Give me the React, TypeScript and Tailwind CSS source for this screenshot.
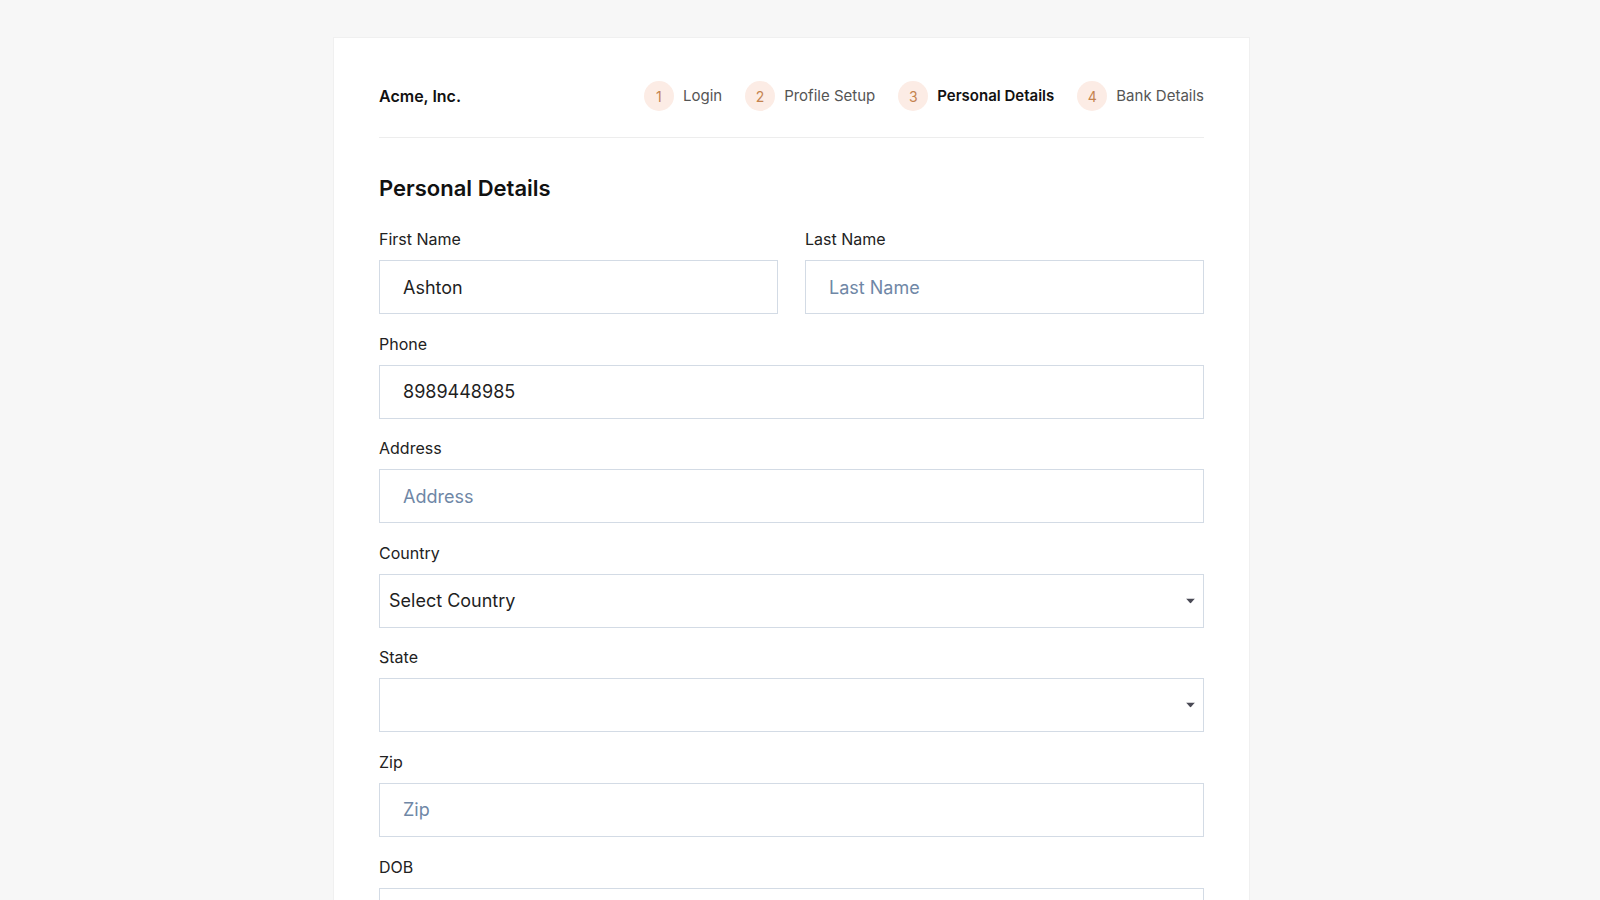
import React from 'react';

const steps = [
  { number: '1', label: 'Login' },
  { number: '2', label: 'Profile Setup' },
  { number: '3', label: 'Personal Details', active: true },
  { number: '4', label: 'Bank Details' },
];

const inputClass =
  'w-full h-[54px] border border-[#d3dbe5] bg-white px-[23px] text-[18px] text-[#1f1f1f] placeholder:text-[#6f87a6] outline-none';

const Field: React.FC<{ label: string; children: React.ReactNode }> = ({ label, children }) => (
  <div>
    <label className="block text-[16px] leading-[24px] text-[#222] mb-[9px]">{label}</label>
    {children}
  </div>
);

const SelectBox: React.FC<{ value?: string }> = ({ value }) => (
  <div className="relative">
    <select
      defaultValue={value ?? ''}
      className="w-full h-[54px] appearance-none border border-[#d3dbe5] bg-white pl-[9px] pr-8 text-[18px] text-[#1f1f1f] outline-none"
    >
      {value ? <option value={value}>{value}</option> : <option value=""></option>}
    </select>
    {/* small dropdown triangle */}
    <svg className="absolute right-[9px] top-1/2 -translate-y-1/2 pointer-events-none" width="9" height="5" viewBox="0 0 9 5">
      <path d="M0 0h9L4.5 5z" fill="#4a4a55" />
    </svg>
  </div>
);

export default function App() {
  return (
    <div className="min-h-screen bg-[#f7f7f7] pr-[17px] pt-[37px] pb-[37px] font-['Inter',sans-serif]">
      <div className="mx-auto w-[917px] min-h-[1899px] bg-white border border-[#f0f0f0] px-[45px]">
        {/* Header with stepper */}
        <div className="flex items-center justify-between pt-[43px] pb-[26px] border-b border-[#ededed]">
          <div className="text-[16px] font-semibold text-[#111]">Acme, Inc.</div>
          <div className="flex items-center gap-[23px]">
            {steps.map((step) => (
              <div key={step.number} className="flex items-center gap-[9px]">
                <div className="w-[30px] h-[30px] rounded-full bg-[#fcece5] flex items-center justify-center text-[14px] text-[#c4834f]">
                  {step.number}
                </div>
                <span
                  className={
                    step.active
                      ? 'text-[15px] font-semibold text-[#111]'
                      : 'text-[15px] text-[#555]'
                  }
                >
                  {step.label}
                </span>
              </div>
            ))}
          </div>
        </div>

        <h2 className="mt-[36px] text-[22px] leading-[28px] font-semibold text-[#111]">Personal Details</h2>

        <div className="mt-[25px] flex flex-col gap-[17.6px]">
          <div className="grid grid-cols-2 gap-x-[27px]">
            <Field label="First Name">
              <input className={inputClass} defaultValue="Ashton" placeholder="First Name" />
            </Field>
            <Field label="Last Name">
              <input className={inputClass} placeholder="Last Name" />
            </Field>
          </div>
          <Field label="Phone">
            <input className={inputClass} defaultValue="8989448985" placeholder="Phone" />
          </Field>
          <Field label="Address">
            <input className={inputClass} placeholder="Address" />
          </Field>
          <Field label="Country">
            <SelectBox value="Select Country" />
          </Field>
          <Field label="State">
            <SelectBox />
          </Field>
          <Field label="Zip">
            <input className={inputClass} placeholder="Zip" />
          </Field>
          <Field label="DOB">
            <input className={inputClass} placeholder="DOB" />
          </Field>
        </div>
      </div>
    </div>
  );
}
